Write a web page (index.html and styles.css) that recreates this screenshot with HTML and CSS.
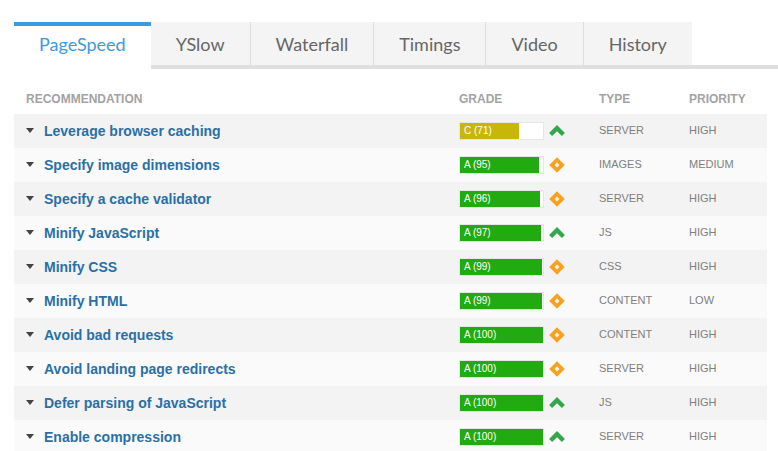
FILE: index.html
```html
<!DOCTYPE html>
<html lang="en">
<head>
    <meta charset="utf-8">
    <title>Performance Report</title>
    <link rel="stylesheet" href="styles.css">
</head>
<body>
    <!-- Icon shapes used by the grade column -->
    <svg class="sprite" aria-hidden="true">
        <symbol id="up" viewBox="0 0 16 16">
            <path fill="#31a84c" d="M8 2 15.9 9.900l-3 3L8 8.200l-4.900 4.700-3-3z"/>
        </symbol>
        <symbol id="average" viewBox="0 0 16 16">
            <path fill="#f8a21f" fill-rule="evenodd" d="M8 .2 15.8 8 8 15.8.2 8zM8 5.6 5.6 8 8 10.4 10.4 8z"/>
        </symbol>
    </svg>

    <nav class="tabs">
        <a class="tab active" href="#pagespeed">PageSpeed</a>
        <a class="tab" href="#yslow">YSlow</a>
        <a class="tab" href="#waterfall">Waterfall</a>
        <a class="tab" href="#timings">Timings</a>
        <a class="tab" href="#video">Video</a>
        <a class="tab" href="#history">History</a>
    </nav>

    <table class="rules" id="pagespeed">
        <thead>
            <tr>
                <th>RECOMMENDATION</th>
                <th class="col-grade">GRADE</th>
                <th class="col-small">TYPE</th>
                <th class="col-small">PRIORITY</th>
            </tr>
        </thead>
        <tbody>
            <tr>
                <td><a class="rule" href="#caching">Leverage browser caching</a></td>
                <td><div class="grade"><div class="bar"><div class="fill c" style="width: 71%">C (71)</div></div><svg class="icon"><use href="#up"/></svg></div></td>
                <td class="label">SERVER</td>
                <td class="label">HIGH</td>
            </tr>
            <tr>
                <td><a class="rule" href="#dimensions">Specify image dimensions</a></td>
                <td><div class="grade"><div class="bar"><div class="fill" style="width: 95%">A (95)</div></div><svg class="icon"><use href="#average"/></svg></div></td>
                <td class="label">IMAGES</td>
                <td class="label">MEDIUM</td>
            </tr>
            <tr>
                <td><a class="rule" href="#validator">Specify a cache validator</a></td>
                <td><div class="grade"><div class="bar"><div class="fill" style="width: 96%">A (96)</div></div><svg class="icon"><use href="#average"/></svg></div></td>
                <td class="label">SERVER</td>
                <td class="label">HIGH</td>
            </tr>
            <tr>
                <td><a class="rule" href="#minify-js">Minify JavaScript</a></td>
                <td><div class="grade"><div class="bar"><div class="fill" style="width: 97%">A (97)</div></div><svg class="icon"><use href="#up"/></svg></div></td>
                <td class="label">JS</td>
                <td class="label">HIGH</td>
            </tr>
            <tr>
                <td><a class="rule" href="#minify-css">Minify CSS</a></td>
                <td><div class="grade"><div class="bar"><div class="fill" style="width: 99%">A (99)</div></div><svg class="icon"><use href="#average"/></svg></div></td>
                <td class="label">CSS</td>
                <td class="label">HIGH</td>
            </tr>
            <tr>
                <td><a class="rule" href="#minify-html">Minify HTML</a></td>
                <td><div class="grade"><div class="bar"><div class="fill" style="width: 99%">A (99)</div></div><svg class="icon"><use href="#average"/></svg></div></td>
                <td class="label">CONTENT</td>
                <td class="label">LOW</td>
            </tr>
            <tr>
                <td><a class="rule" href="#bad-requests">Avoid bad requests</a></td>
                <td><div class="grade"><div class="bar"><div class="fill" style="width: 100%">A (100)</div></div><svg class="icon"><use href="#average"/></svg></div></td>
                <td class="label">CONTENT</td>
                <td class="label">HIGH</td>
            </tr>
            <tr>
                <td><a class="rule" href="#redirects">Avoid landing page redirects</a></td>
                <td><div class="grade"><div class="bar"><div class="fill" style="width: 100%">A (100)</div></div><svg class="icon"><use href="#average"/></svg></div></td>
                <td class="label">SERVER</td>
                <td class="label">HIGH</td>
            </tr>
            <tr>
                <td><a class="rule" href="#defer-js">Defer parsing of JavaScript</a></td>
                <td><div class="grade"><div class="bar"><div class="fill" style="width: 100%">A (100)</div></div><svg class="icon"><use href="#up"/></svg></div></td>
                <td class="label">JS</td>
                <td class="label">HIGH</td>
            </tr>
            <tr>
                <td><a class="rule" href="#compression">Enable compression</a></td>
                <td><div class="grade"><div class="bar"><div class="fill" style="width: 100%">A (100)</div></div><svg class="icon"><use href="#up"/></svg></div></td>
                <td class="label">SERVER</td>
                <td class="label">HIGH</td>
            </tr>
        </tbody>
    </table>
</body>
</html>
```

FILE: styles.css
```css
* {
    box-sizing: border-box;
}

body {
    margin: 0;
    padding: 22px 0 0 14px;
    background: #ffffff;
    font-family: "Liberation Sans", Arial, sans-serif;
    overflow: hidden;
}

.sprite {
    display: none;
}

.tabs {
    display: flex;
    height: 47px;
    background: linear-gradient(#dfdfdf, #dfdfdf) bottom / 100% 4px no-repeat;
}

.tab {
    padding: 4px 25px 0;
    border-bottom: 4px solid #dfdfdf;
    background: #f4f4f4;
    color: #666666;
    font-family: Lato, sans-serif;
    font-size: 18px;
    line-height: 37px;
    text-decoration: none;
}

.tab + .tab + .tab {
    border-left: 1px solid #dddddd;
}

.tab.active {
    padding-top: 0;
    border-top: 4px solid #3d9ae0;
    border-bottom: 0;
    background: #ffffff;
    color: #3d9ae0;
}

.rules {
    width: calc(100% - 11px);
    table-layout: fixed;
    border-collapse: collapse;
}

.col-grade {
    width: 140px;
}

.col-small {
    width: 90px;
}

th {
    height: 45px;
    padding: 14px 12px 0;
    color: #a3a3a3;
    font-size: 12px;
    text-align: left;
}

td {
    height: 34px;
    padding: 0 12px;
}

.label {
    padding-bottom: 2px;
    color: #808080;
    font-size: 11px;
}

tbody tr {
    background: #fafafa;
}

tbody tr:nth-child(odd) {
    background: #f3f3f3;
}

.rule {
    display: flex;
    align-items: center;
    gap: 10px;
    color: #2a70a6;
    font-size: 14px;
    font-weight: bold;
    text-decoration: none;
}

/* Expand arrow */
.rule::before {
    content: "";
    margin-bottom: 2px;
    border: 4px solid transparent;
    border-top: 5px solid #444444;
    border-bottom: 0;
}

.grade {
    display: flex;
    align-items: center;
    gap: 5px;
}

.bar {
    width: 85px;
    height: 18px;
    border: 1px solid #e6e6e6;
    background: #ffffff;
}

.fill {
    height: 16px;
    padding-left: 4px;
    background: #22aa11;
    color: #ffffff;
    font-size: 10px;
    line-height: 16px;
    white-space: nowrap;
}

.fill.c {
    background: #c9b60a;
}

.icon {
    width: 16px;
    height: 16px;
}
```
